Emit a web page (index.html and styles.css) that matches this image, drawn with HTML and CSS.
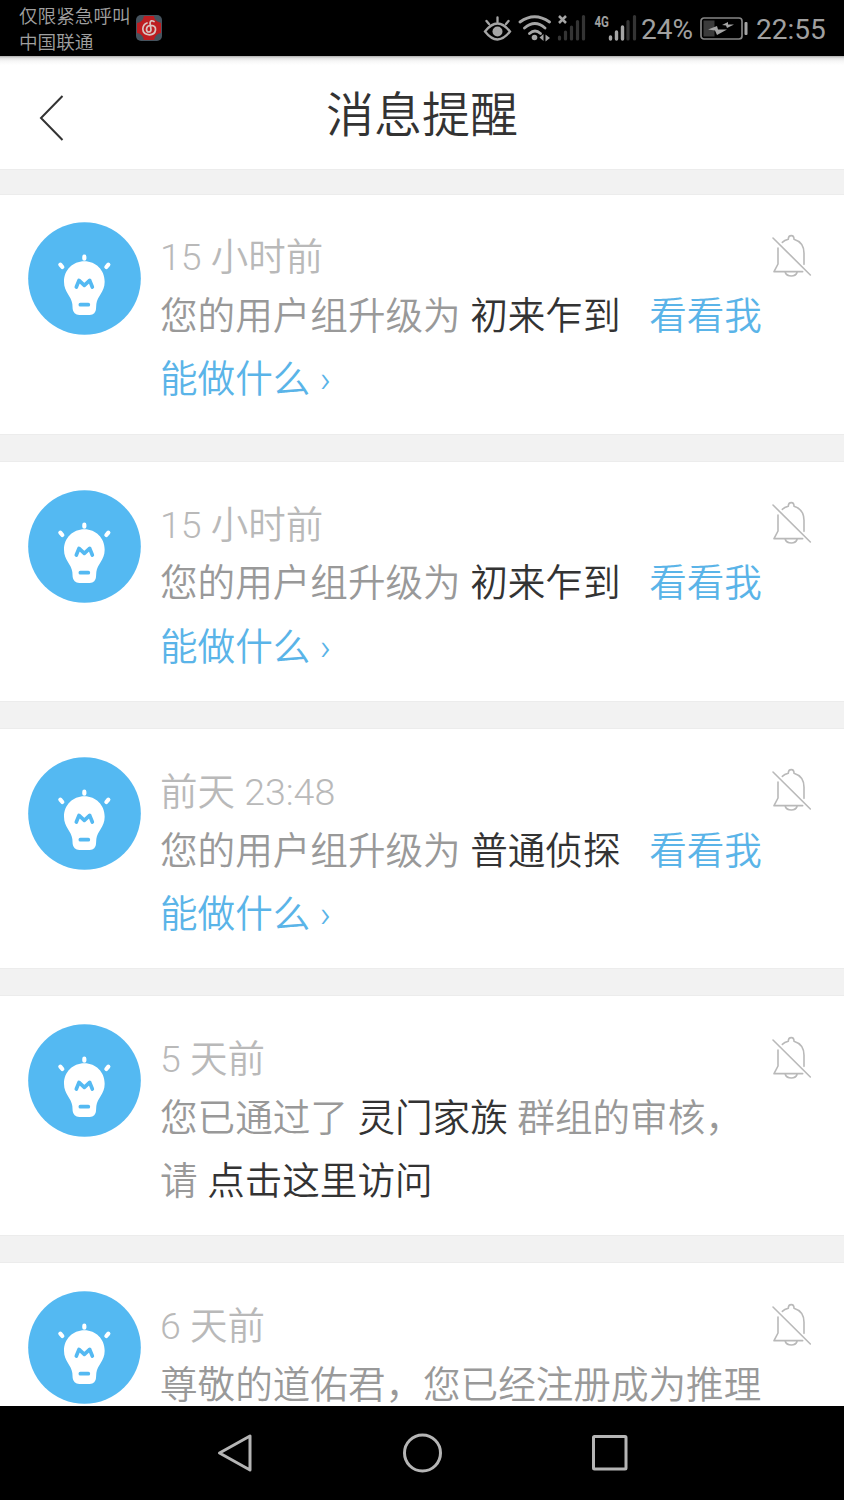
FILE: index.html
```
<!DOCTYPE html>
<html lang="zh-CN">
<head>
<meta charset="utf-8">
<title>消息提醒</title>
<link rel="stylesheet" href="styles.css">
</head>
<body>
<svg class="defs" width="0" height="0" aria-hidden="true">
  <symbol id="bulb" viewBox="24 37 339 339">
    <circle cx="193.500" cy="206.500" r="169" fill="#54b9f2"/>
    <path d="M193 155C158 155 132 182 132 216C132 248 154 258 157 283L158 298Q160 315 178 316H209Q227 315 228 298L229 283C232 258 254 248 254 216C254 182 228 155 193 155Z" fill="#fff"/>
    <path d="M193 141V147M121 165L127 172M265 165L259 172" fill="none" stroke="#fff" stroke-width="12.500" stroke-linecap="round"/>
    <path d="M169 232L177 212L193 227L209 212L217 232M181 285H205" fill="none" stroke="#54b9f2" stroke-width="11" stroke-linecap="round" stroke-linejoin="round"/>
  </symbol>
  <symbol id="bell-off" viewBox="60 36 132 144">
    <path d="M69 54L181 165M84 84V132L72 155H158M97 67Q103 61 115 58Q115 47 124 47Q132 47 132 58C152 64 162 78 162 100V133M106 158Q110 168 124 168Q137 168 141 158" fill="none" stroke="#b9b9b9" stroke-width="4.800" stroke-linecap="round" stroke-linejoin="round"/>
  </symbol>
</svg>
<div class="screen">
  <div class="status">
    <div class="carrier">仅限紧急呼叫<br>中国联通</div>
    <svg class="music" viewBox="0 0 26 26"><rect width="26" height="26" rx="5" fill="#46535e"/><path d="M8 1H18Q18 6 25 8V18Q19 19 18 25H8Q7 19 1 18V8Q7 7 8 1Z" fill="#bd1d21"/><rect x="5" y="5" width="16" height="16" rx="5" fill="#bd1d21"/><path d="M18 6.500Q14.500 4.500 14 8L15 14.500Q15 17 12.800 17Q10.500 17 10.500 14.200Q10.700 10.500 15 10.300Q20 10.500 19.500 15Q18.800 19.500 13.500 19.800Q7 19.500 6.800 14Q7 9.500 11 8" fill="none" stroke="#d8c5c2" stroke-width="1.700" stroke-linecap="round"/></svg>
    <svg class="signals" viewBox="0 0 158 40">
      <g fill="none" stroke="#a5a5a5" stroke-width="2.300" stroke-linecap="round">
        <path d="M3 21.500Q15.500 5.500 28 21.500Q15.500 37.500 3 21.500ZM15.500 12V7.500M7 14L4.500 11M24 14L26.500 11"/>
        <path d="M38 12Q52.500 1.500 67.500 12M42.500 18Q53 9 63 18M47.500 23.500Q53 18.500 58.500 23.500" stroke-width="2.800"/>
        <path d="M77 6L84 13M84 6L77 13" stroke-width="2.500" stroke-linecap="butt"/>
      </g>
      <circle cx="15.500" cy="21.500" r="5" fill="#a5a5a5"/><circle cx="52.500" cy="27.500" r="2.800" fill="#a5a5a5"/>
      <path d="M57.500 27.500L61.500 24V31ZM63.500 24.500L68 28L63.500 31.500Z" fill="#a5a5a5"/>
      <path d="M77.500 27V29M83.500 22V29M89.500 17V29M95.500 11.500V29M101.500 6.500V29M146 11.500V29M152.500 6.500V29" stroke="#343434" stroke-width="3.200" stroke-linecap="round"/>
      <path d="M128.500 27V29M134.500 22V29M140.500 17V29" stroke="#a5a5a5" stroke-width="3.400" stroke-linecap="round"/>
      <text class="network" x="112.500" y="16.500" textLength="14.500" lengthAdjust="spacingAndGlyphs">4G</text>
    </svg>
    <span class="percent">24%</span>
    <svg class="battery" viewBox="0 0 48 24"><rect x="1" y="1" width="41" height="21" rx="3" fill="none" stroke="#858585" stroke-width="1.700"/><rect x="3.500" y="3.500" width="11" height="16" fill="#3b3b3b"/><path d="M8 12.500L17 9L18 12.500H27L17 18L15 13.500ZM22 8L28 5V7.500H34L27 11L26 8.500Z" fill="#a5a5a5"/><rect x="44.500" y="5" width="3" height="13" rx="1" fill="#a5a5a5"/></svg>
    <span class="clock">22:55</span>
  </div>
  <header class="header">
    <svg class="back" viewBox="0 0 26 48"><path d="M24.500 2L3 24L24.500 46" fill="none" stroke="#333" stroke-width="2"/></svg>
    <h1 class="title">消息提醒</h1>
  </header>
  <main class="list">
    <article class="card">
      <svg class="avatar"><use href="#bulb"/></svg>
      <div class="content"><div class="time">15 小时前</div><p class="message">您的用户组升级为 <b class="name">初来乍到</b> &nbsp; <a class="link">看看我<br>能做什么 ›</a></p></div>
      <svg class="bell"><use href="#bell-off"/></svg>
    </article>
    <article class="card">
      <svg class="avatar"><use href="#bulb"/></svg>
      <div class="content"><div class="time">15 小时前</div><p class="message">您的用户组升级为 <b class="name">初来乍到</b> &nbsp; <a class="link">看看我<br>能做什么 ›</a></p></div>
      <svg class="bell"><use href="#bell-off"/></svg>
    </article>
    <article class="card">
      <svg class="avatar"><use href="#bulb"/></svg>
      <div class="content"><div class="time">前天 23:48</div><p class="message">您的用户组升级为 <b class="name">普通侦探</b> &nbsp; <a class="link">看看我<br>能做什么 ›</a></p></div>
      <svg class="bell"><use href="#bell-off"/></svg>
    </article>
    <article class="card">
      <svg class="avatar"><use href="#bulb"/></svg>
      <div class="content"><div class="time">5 天前</div><p class="message">您已通过了 <b class="name">灵门家族</b> 群组的审核，<br>请 <b class="name">点击这里访问</b></p></div>
      <svg class="bell"><use href="#bell-off"/></svg>
    </article>
    <article class="card">
      <svg class="avatar"><use href="#bulb"/></svg>
      <div class="content"><div class="time">6 天前</div><p class="message">尊敬的道佑君，您已经注册成为推理</p></div>
      <svg class="bell"><use href="#bell-off"/></svg>
    </article>
  </main>
  <nav class="navbar">
    <svg class="key" viewBox="0 0 40 40"><path d="M35 3V37L4.500 20Z" fill="none" stroke="#b5b5b5" stroke-width="3" stroke-linejoin="round"/></svg>
    <svg class="key" viewBox="0 0 40 40"><circle cx="19.500" cy="20" r="18" fill="none" stroke="#b5b5b5" stroke-width="3"/></svg>
    <svg class="key" viewBox="0 0 40 40"><rect x="3.500" y="3.500" width="32.500" height="32.500" rx="1" fill="none" stroke="#b5b5b5" stroke-width="3"/></svg>
  </nav>
</div>
</body>
</html>
```

FILE: styles.css
```
* { box-sizing: border-box; }
body { margin: 0; font-family: Roboto, "Noto Sans CJK SC", sans-serif; }
svg { display: block; flex: none; }
.defs { position: absolute; }
.screen { width: 844px; height: 1500px; display: flex; flex-direction: column; overflow: hidden; background: #f2f2f2; }

.status { flex: none; height: 56px; display: flex; align-items: flex-start; padding-left: 19px; background: #000; color: #a0a0a0; white-space: nowrap; }
.carrier { width: 117px; padding-top: 4px; font-size: 18.6px; line-height: 26px; font-weight: 350; }
.music { width: 26px; height: 26px; margin-top: 15px; }
.signals { width: 158px; height: 40px; margin: 10px 0 0 320px; }
.network { font: bold 15px Roboto, sans-serif; fill: #a0a0a0; }
.percent { width: 58px; margin-left: 1px; font-size: 28px; line-height: 59px; }
.battery { width: 48px; height: 24px; margin-top: 17px; margin-left: 1px; }
.clock { margin-left: 8px; font-size: 28px; line-height: 59px; }

.header { flex: none; height: 113px; display: flex; align-items: flex-start; background: linear-gradient(#aaa 0, #e0e0e0 2px, #f6f6f6 5px, #fff 9px); }
.back { width: 26px; height: 48px; margin: 38px 0 0 38px; }
.title { flex: 1; margin: 0 64px 0 0; padding-top: 25px; text-align: center; font-size: 48px; line-height: 70px; font-weight: 350; color: #333; }

.list { flex: 1; min-height: 0; overflow: hidden; display: flex; flex-direction: column; gap: 26.2px; padding-top: 23.6px; border-top: 1px solid #ececec; }
.card { flex: none; height: 241px; display: flex; align-items: flex-start; padding: 27.8px 30px 0 28px; background: #fff; border-top: 1px solid #ececec; border-bottom: 1px solid #ececec; }
.avatar { width: 113px; height: 113px; }
.content { flex: 1; padding-left: 19px; white-space: nowrap; }
.time { height: 62.8px; font-size: 37.5px; line-height: 70px; font-weight: 350; color: #b9b9b9; }
.message { margin: 0; font-size: 37.6px; line-height: 63.2px; font-weight: 350; color: #999; word-spacing: 0.4px; }
.name { font-weight: 350; color: #333; }
.link { color: #5ab4e8; }
.bell { width: 44px; height: 48px; margin-top: 9.6px; }

.navbar { flex: none; height: 94px; display: flex; justify-content: space-between; align-items: center; padding: 0 214px 0 215px; background: #000; }
.key { width: 40px; height: 40px; }
```
